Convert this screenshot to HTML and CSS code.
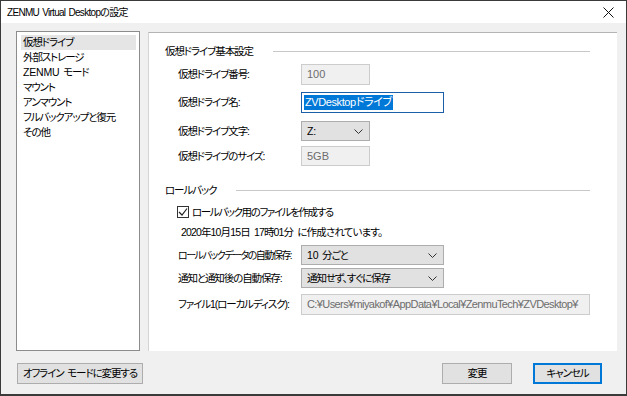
FILE: index.html
```html
<!DOCTYPE html>
<html lang="ja">
<head>
  <meta charset="UTF-8">
  <title>ZENMU Virtual Desktopの設定</title>
  <link rel="stylesheet" href="styles.css">
</head>
<body>
  <div class="window">
    <div class="titlebar">
      <span class="title">ZENMU Virtual Desktopの設定</span>
      <svg class="close" width="11" height="11" viewBox="0 0 11 11"><path d="M0.5 0.5L10.5 10.5M10.5 0.5L0.5 10.5" stroke="#111" stroke-width="1"/></svg>
    </div>
    <div class="content">
      <div class="main">
        <ul class="menu">
          <li class="selected">仮想ドライブ</li>
          <li>外部ストレージ</li>
          <li><span class="en">ZENMU</span> モード</li>
          <li>マウント</li>
          <li>アンマウント</li>
          <li>フルバックアップと復元</li>
          <li>その他</li>
        </ul>
        <div class="panel">
          <div class="section">
            <span>仮想ドライブ基本設定</span>
            <span class="rule"></span>
          </div>
          <div class="row r1">
            <span class="label">仮想ドライブ番号:</span>
            <span class="field disabled small">100</span>
          </div>
          <div class="row r2">
            <span class="label">仮想ドライブ名:</span>
            <span class="field focused name"><span class="sel">ZVDesktopドライブ</span></span>
          </div>
          <div class="row r3">
            <span class="label">仮想ドライブ文字:</span>
            <span class="combo small"><span class="en">Z:</span>
              <svg class="chev" width="9" height="5" viewBox="0 0 9 5"><polyline points="0.5,0.5 4.5,4.5 8.5,0.5" fill="none" stroke="#333"/></svg>
            </span>
          </div>
          <div class="row r4">
            <span class="label">仮想ドライブのサイズ:</span>
            <span class="field disabled small">5GB</span>
          </div>

          <div class="section s2">
            <span>ロールバック</span>
            <span class="rule"></span>
          </div>
          <div class="check-row">
            <span class="checkbox">
              <svg width="10" height="10" viewBox="0 0 10 10"><polyline points="1,5 4,8 9,1.5" fill="none" stroke="#222" stroke-width="1.2"/></svg>
            </span>
            <span class="check-label">ロールバック用のファイルを作成する</span>
          </div>
          <div class="note">2020年10月15日 17時01分 に作成されています。</div>
          <div class="row r5">
            <span class="label">ロールバックデータの自動保存:</span>
            <span class="combo wide"><span><span class="en">10</span> 分ごと</span>
              <svg class="chev" width="9" height="5" viewBox="0 0 9 5"><polyline points="0.5,0.5 4.5,4.5 8.5,0.5" fill="none" stroke="#333"/></svg>
            </span>
          </div>
          <div class="row r6">
            <span class="label">通知と通知後の自動保存:</span>
            <span class="combo wide">通知せず、すぐに保存
              <svg class="chev" width="9" height="5" viewBox="0 0 9 5"><polyline points="0.5,0.5 4.5,4.5 8.5,0.5" fill="none" stroke="#333"/></svg>
            </span>
          </div>
          <div class="row r7">
            <span class="label">ファイル1(ローカルディスク):</span>
            <span class="field disabled path">C:¥Users¥miyakof¥AppData¥Local¥ZenmuTech¥ZVDesktop¥</span>
          </div>
        </div>
      </div>
      <div class="buttons">
        <button class="btn offline">オフライン モードに変更する</button>
        <span class="spacer"></span>
        <button class="btn">変更</button>
        <button class="btn default">キャンセル</button>
      </div>
    </div>
  </div>
</body>
</html>
```

FILE: styles.css
```css
body {
  margin: 0;
  font-family: "Liberation Sans", "Noto Sans CJK JP", sans-serif;
  font-size: 10.5px;
  line-height: 15px;
  letter-spacing: -1.1px;
  word-spacing: 2px;
  color: #000;
  font-feature-settings: "palt";
}
.en {
  letter-spacing: -0.2px;
}
.window {
  width: 627px;
  height: 396px;
  box-sizing: border-box;
  border: 1px solid #3a3a3a;
  border-bottom-width: 2px;
  background: #f0f0f0;
  display: flex;
  flex-direction: column;
}
.titlebar {
  height: 22px;
  background: #fff;
  display: flex;
  align-items: center;
  padding: 0 10px 0 6px;
}
.title {
  flex: 1;
  font-size: 10px;
  letter-spacing: -0.7px;
  word-spacing: 1px;
}
.close {
  margin-right: 2px;
}
.content {
  flex: 1;
  padding: 8px 9px 0 15px;
  display: flex;
  flex-direction: column;
}
.main {
  display: flex;
  gap: 8px;
  height: 320px;
}
.menu {
  list-style: none;
  margin: 0;
  width: 126px;
  box-sizing: border-box;
  border: 1px solid #8c8c8c;
  background: #fff;
  padding: 3px 3px 0 4px;
}
.menu li {
  height: 15px;
  padding-left: 2px;
  white-space: nowrap;
}
.menu li.selected {
  background: #e5e5e5;
}
.panel {
  flex: 1;
  margin-top: 1px;
  background: #fff;
  border-top: 1px solid #b4b4b4;
  border-left: 1px solid #d4d4d4;
  padding: 0 27px 0 16px;
}
.section {
  display: flex;
  align-items: center;
  height: 20px;
  margin-top: 8px;
}
.section .rule {
  flex: 1;
  height: 1px;
  background: #c8c8c8;
  margin-left: 20px;
}
.section.s2 {
  margin-top: 14px;
}
.row {
  display: flex;
  align-items: center;
  padding-left: 13px;
}
.label {
  width: 123px;
  white-space: nowrap;
}
.r5 .label {
  font-size: 10px;
  letter-spacing: -1.5px;
}
.field, .combo {
  box-sizing: border-box;
  height: 21px;
  display: flex;
  align-items: center;
  padding-left: 5px;
  white-space: nowrap;
}
.field.disabled {
  background: #f0f0f0;
  border: 1px solid #cccccc;
  color: #6d6d6d;
  font-size: 11px;
  letter-spacing: 0;
}
.field.focused {
  border: 1px solid #1a5fa8;
  padding-left: 2px;
}
.sel {
  background: #0078d7;
  color: #fff;
  padding: 0 1px;
  font-size: 11px;
  letter-spacing: -0.4px;
}
.small { width: 69px; }
.name { width: 143px; }
.wide { width: 143px; }
.field.path {
  width: 289px;
  overflow: hidden;
  letter-spacing: -0.6px;
}
.combo {
  background: #e1e1e1;
  border: 1px solid #adadad;
  height: 20px;
  position: relative;
}
.chev {
  position: absolute;
  right: 6px;
  top: 7px;
}
.r1 { margin-top: 3px; }
.r2 { margin-top: 7px; }
.r3 { margin-top: 8px; }
.r4 { margin-top: 5px; }
.r4 .field { height: 20px; }
.r5 { margin-top: 5px; }
.r6 { margin-top: 3px; }
.r7 { margin-top: 6px; }
.check-row {
  display: flex;
  align-items: center;
  height: 16px;
  margin-top: 4px;
  padding-left: 12px;
  gap: 3px;
}
.check-label {
  letter-spacing: -1.4px;
}
.checkbox {
  width: 12px;
  height: 12px;
  box-sizing: border-box;
  border: 1px solid #333;
  display: flex;
  align-items: center;
  justify-content: center;
}
.note {
  height: 16px;
  line-height: 16px;
  margin-top: 4px;
  padding-left: 16px;
  letter-spacing: -0.85px;
}
.buttons {
  display: flex;
  align-items: center;
  margin-top: 12px;
  padding-right: 15px;
}
.spacer { flex: 1; }
.btn {
  font: inherit;
  letter-spacing: inherit;
  word-spacing: inherit;
  height: 21px;
  padding: 0;
  background: #e1e1e1;
  border: 1px solid #adadad;
  color: #000;
  width: 70px;
  margin-left: 21px;
}
.btn.offline {
  width: 126px;
  margin-left: 1px;
}
.btn.default {
  border: 2px solid #0078d7;
  width: 69px;
}
```
